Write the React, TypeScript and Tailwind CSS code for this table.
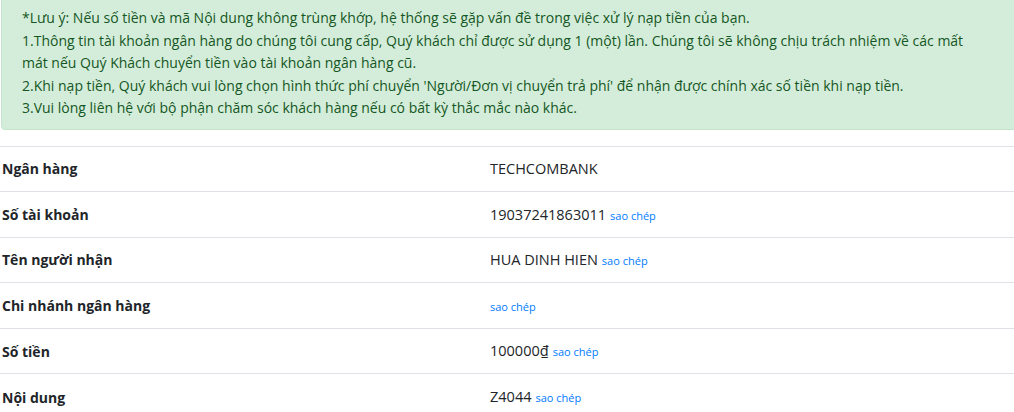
import React from "react";

type Row = { label: string; value?: string; copy: boolean };

const rows: Row[] = [
  { label: "Ngân hàng", value: "TECHCOMBANK", copy: false },
  { label: "Số tài khoản", value: "19037241863011", copy: true },
  { label: "Tên người nhận", value: "HUA DINH HIEN", copy: true },
  { label: "Chi nhánh ngân hàng", copy: true },
  { label: "Số tiền", value: "100000₫", copy: true },
  { label: "Nội dung", value: "Z4044", copy: true },
];

export default function App() {
  return (
    <div
      className="h-[412px] w-[1014px] overflow-hidden bg-white text-[#212529]"
      style={{ fontFamily: '"Open Sans", "Noto Sans", sans-serif' }}
    >
      <div className="-mt-[6px] ml-[1px] mr-[-10px] mb-[16px] rounded border border-[#c3e6cb] bg-[#d4edda] pt-[12px] pb-[9px] pl-[20px] pr-[45px] text-[14px] leading-[22.5px] text-[#155724]">
        <div>*Lưu ý: Nếu số tiền và mã Nội dung không trùng khớp, hệ thống sẽ gặp vấn đề trong việc xử lý nạp tiền của bạn.</div>
        <div>
          1.Thông tin tài khoản ngân hàng do chúng tôi cung cấp, Quý khách chỉ được sử dụng 1 (một) lần. Chúng tôi sẽ không chịu trách nhiệm về các mất mát nếu Quý Khách chuyển tiền vào tài khoản ngân hàng cũ.
        </div>
        <div>2.Khi nạp tiền, Quý khách vui lòng chọn hình thức phí chuyển 'Người/Đơn vị chuyển trả phí' để nhận được chính xác số tiền khi nạp tiền.</div>
        <div>3.Vui lòng liên hệ với bộ phận chăm sóc khách hàng nếu có bất kỳ thắc mắc nào khác.</div>
      </div>

      <table className="w-full border-collapse text-[14px]">
        <tbody>
          {rows.map((r) => (
            <tr key={r.label} className="h-[45.6px] border-t border-[#dee2e6]">
              <td className="w-[490px] pl-[2px] align-middle font-bold">{r.label}</td>
              <td className="align-middle text-[14.5px]">
                {r.value ? <span>{r.value}</span> : null}
                {r.copy ? (
                  <span className={`text-[11px] text-[#007bff] ${r.value ? "ml-[4px]" : ""}`}>sao chép</span>
                ) : null}
              </td>
            </tr>
          ))}
        </tbody>
      </table>
    </div>
  );
}
